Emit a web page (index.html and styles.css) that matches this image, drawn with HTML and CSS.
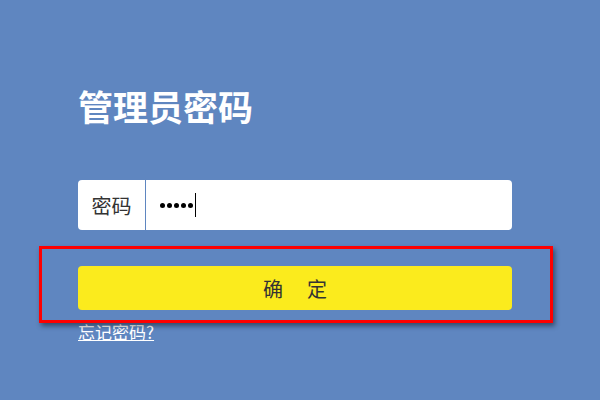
FILE: index.html
```html
<!DOCTYPE html>
<html lang="zh-CN">
<head>
  <meta charset="UTF-8" />
  <title>管理员密码</title>
  <link rel="stylesheet" href="styles.css">
</head>
<body>
  <div class="login">
    <h1 class="title">管理员密码</h1>

    <div class="field">
      <label class="field-label" for="pwd">密码</label>
      <div class="field-input">
        <span class="dot"></span><span class="dot"></span><span class="dot"></span><span class="dot"></span><span class="dot"></span><span class="caret"></span>
      </div>
    </div>

    <div class="submit-wrap">
      <button class="submit" type="button">确&emsp;定</button>
      <div class="highlight"></div>
    </div>

    <a class="forgot" href="#">忘记密码?</a>
  </div>
</body>
</html>
```

FILE: styles.css
```css
body {
  margin: 0;
  background: #5f86c0;
  font-family: "Noto Sans CJK SC", "Noto Sans", sans-serif;
  width: 600px;
  height: 400px;
  overflow: hidden;
}

.login {
  width: 434px;
  padding: 86px 0 0 78px;
}

.title {
  margin: 0;
  color: #fff;
  font-size: 35px;
  line-height: 40px;
  font-weight: bold;
}

.field {
  margin-top: 54px;
  height: 50px;
  background: #fff;
  border-radius: 4px;
  display: flex;
  align-items: center;
}

.field-label {
  width: 67px;
  height: 100%;
  display: flex;
  align-items: center;
  justify-content: center;
  font-size: 20px;
  color: #333;
  border-right: 1px solid #5f86c0;
}

.field-input {
  flex: 1;
  display: flex;
  align-items: center;
  gap: 2px;
  padding-left: 14px;
}

.dot {
  width: 5px;
  height: 5px;
  border-radius: 50%;
  background: #000;
}

.caret {
  width: 1px;
  height: 24px;
  background: #000;
}

.submit-wrap {
  position: relative;
  margin-top: 36px;
}

.submit {
  display: block;
  width: 100%;
  height: 44px;
  border: none;
  border-radius: 4px;
  background: #fbeb1d;
  color: #333;
  font-family: "Noto Sans CJK SC", sans-serif;
  font-size: 20px;
  letter-spacing: 2px;
  text-indent: 2px;
  cursor: pointer;
}

.highlight {
  position: absolute;
  left: -39px;
  top: -20px;
  right: -41px;
  bottom: -13px;
  border: 3px solid #f00;
  box-shadow: 2px 3px 5px rgba(0, 0, 0, 0.45);
  pointer-events: none;
}

.forgot {
  display: inline-block;
  margin-top: 11px;
  color: #fff;
  font-size: 17px;
  line-height: 22px;
}
```
